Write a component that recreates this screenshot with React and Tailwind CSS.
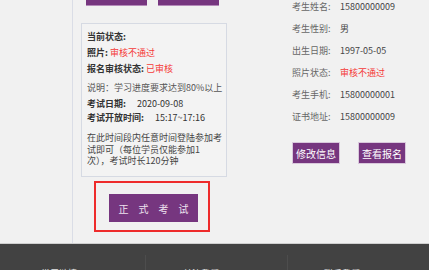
import React from 'react';

const font = { fontFamily: '"Noto Sans CJK SC", "Noto Sans", sans-serif' };

const infoRows = [
  { label: '考生姓名:', value: '15800000009' },
  { label: '考生性别:', value: '男' },
  { label: '出生日期:', value: '1997-05-05' },
  { label: '照片状态:', value: '审核不通过', red: true },
  { label: '考生手机:', value: '15800000001' },
  { label: '证书地址:', value: '15800000009' },
];

export default function App() {
  return (
    <div className="w-[429px] h-[270px] overflow-hidden bg-[#f1f1f1]" style={font}>
      <div className="flex h-[243px] overflow-hidden">
        {/* Seitenleiste */}
        <div className="w-[73px] shrink-0 border-r border-[#dadde6]" />

        <div className="flex pl-[8px]">
          {/* linke Spalte */}
          <div className="w-[146px] shrink-0">
            <div className="flex gap-[11px] pl-[5px] -mt-[20px]">
              <div className="w-[61px] h-[26px] bg-[#76367f] border-b border-[#b48ab9] text-[10px] text-white flex items-end justify-center leading-[14px] pb-[5px]">打印准考证</div>
              <div className="w-[61px] h-[26px] bg-[#76367f] border-b border-[#b48ab9] text-[10px] text-white flex items-end justify-center leading-[14px] pb-[5px]">考试成绩</div>
            </div>

            <div className="mt-[17px] h-[154px] border border-[#d6dae3] bg-[#f3f3f3] pl-[5px] pt-[5px] text-[9px] text-[#333]">
              <div className="leading-[16px] font-bold">当前状态:</div>
              <div className="leading-[16px]">
                <span className="font-bold">照片:</span> <span className="text-[#f53a3a]">审核不通过</span>
              </div>
              <div className="leading-[16px]">
                <span className="font-bold">报名审核状态:</span> <span className="text-[#f53a3a]">已审核</span>
              </div>
              <div className="mt-[3px] leading-[16px] text-[#555] whitespace-nowrap">说明：学习进度要求达到80%以上</div>
              <div className="leading-[16px]">
                <span className="font-bold">考试日期:</span>
                <span className="ml-[11px]">2020-09-08</span>
              </div>
              <div className="leading-[12px]">
                <span className="font-bold">考试开放时间:</span>
                <span className="ml-[11px]">15:17~17:16</span>
              </div>
              <div className="mt-[8px] leading-[11.5px] text-[#444] whitespace-nowrap">
                <div>在此时间段内任意时间登陆参加考</div>
                <div>试即可（每位学员仅能参加1</div>
                <div>次），考试时长120分钟</div>
              </div>
            </div>

            <div className="mt-[4px] ml-[13px] w-[116px] h-[51px] border-2 border-[#ee2b2b] pl-[13px] pt-[11px]">
              <button className="w-[89px] h-[28px] bg-[#76367f] text-[10px] text-[#eee3ef] flex items-center justify-center gap-[10px]">
                <span>正</span>
                <span>式</span>
                <span>考</span>
                <span>试</span>
              </button>
            </div>
          </div>

          {/* rechte Spalte */}
          <div className="ml-[65px] w-[136px] shrink-0">
            <div className="-mt-[4px]">
              {infoRows.map((row) => (
                <div key={row.label} className="flex leading-[22px] text-[9px] whitespace-nowrap">
                  <span className="w-[48px] text-[#666]">{row.label}</span>
                  <span className={row.red ? 'text-[#f53a3a]' : 'text-[#444]'}>{row.value}</span>
                </div>
              ))}
            </div>
            <div className="flex gap-[18px] mt-[14px]">
              <button className="w-[48px] h-[22px] bg-[#76367f] border border-[#d9c8dc] text-[10px] text-white flex items-center justify-center">修改信息</button>
              <button className="w-[48px] h-[22px] bg-[#76367f] border border-[#d9c8dc] text-[10px] text-white flex items-center justify-center">查看报名</button>
            </div>
          </div>
        </div>
      </div>

      {/* Footer */}
      <div className="h-[27px] border-t border-[#cfcfcf] bg-[#424242] flex pl-[3px]">
        <div className="w-[150px] mt-[11px] pl-[38px] pt-[13px] text-[9px] leading-[12px] text-[#e5e5e5] whitespace-nowrap">常用链接</div>
        <div className="w-[150px] mt-[11px] border-l border-[#4d4d4d] pl-[37px] pt-[13px] text-[9px] leading-[12px] text-[#e5e5e5] whitespace-nowrap">关注我们</div>
        <div className="w-[150px] mt-[11px] border-l border-[#4d4d4d] pl-[36px] pt-[13px] text-[9px] leading-[12px] text-[#e5e5e5] whitespace-nowrap">联系我们</div>
      </div>
    </div>
  );
}
